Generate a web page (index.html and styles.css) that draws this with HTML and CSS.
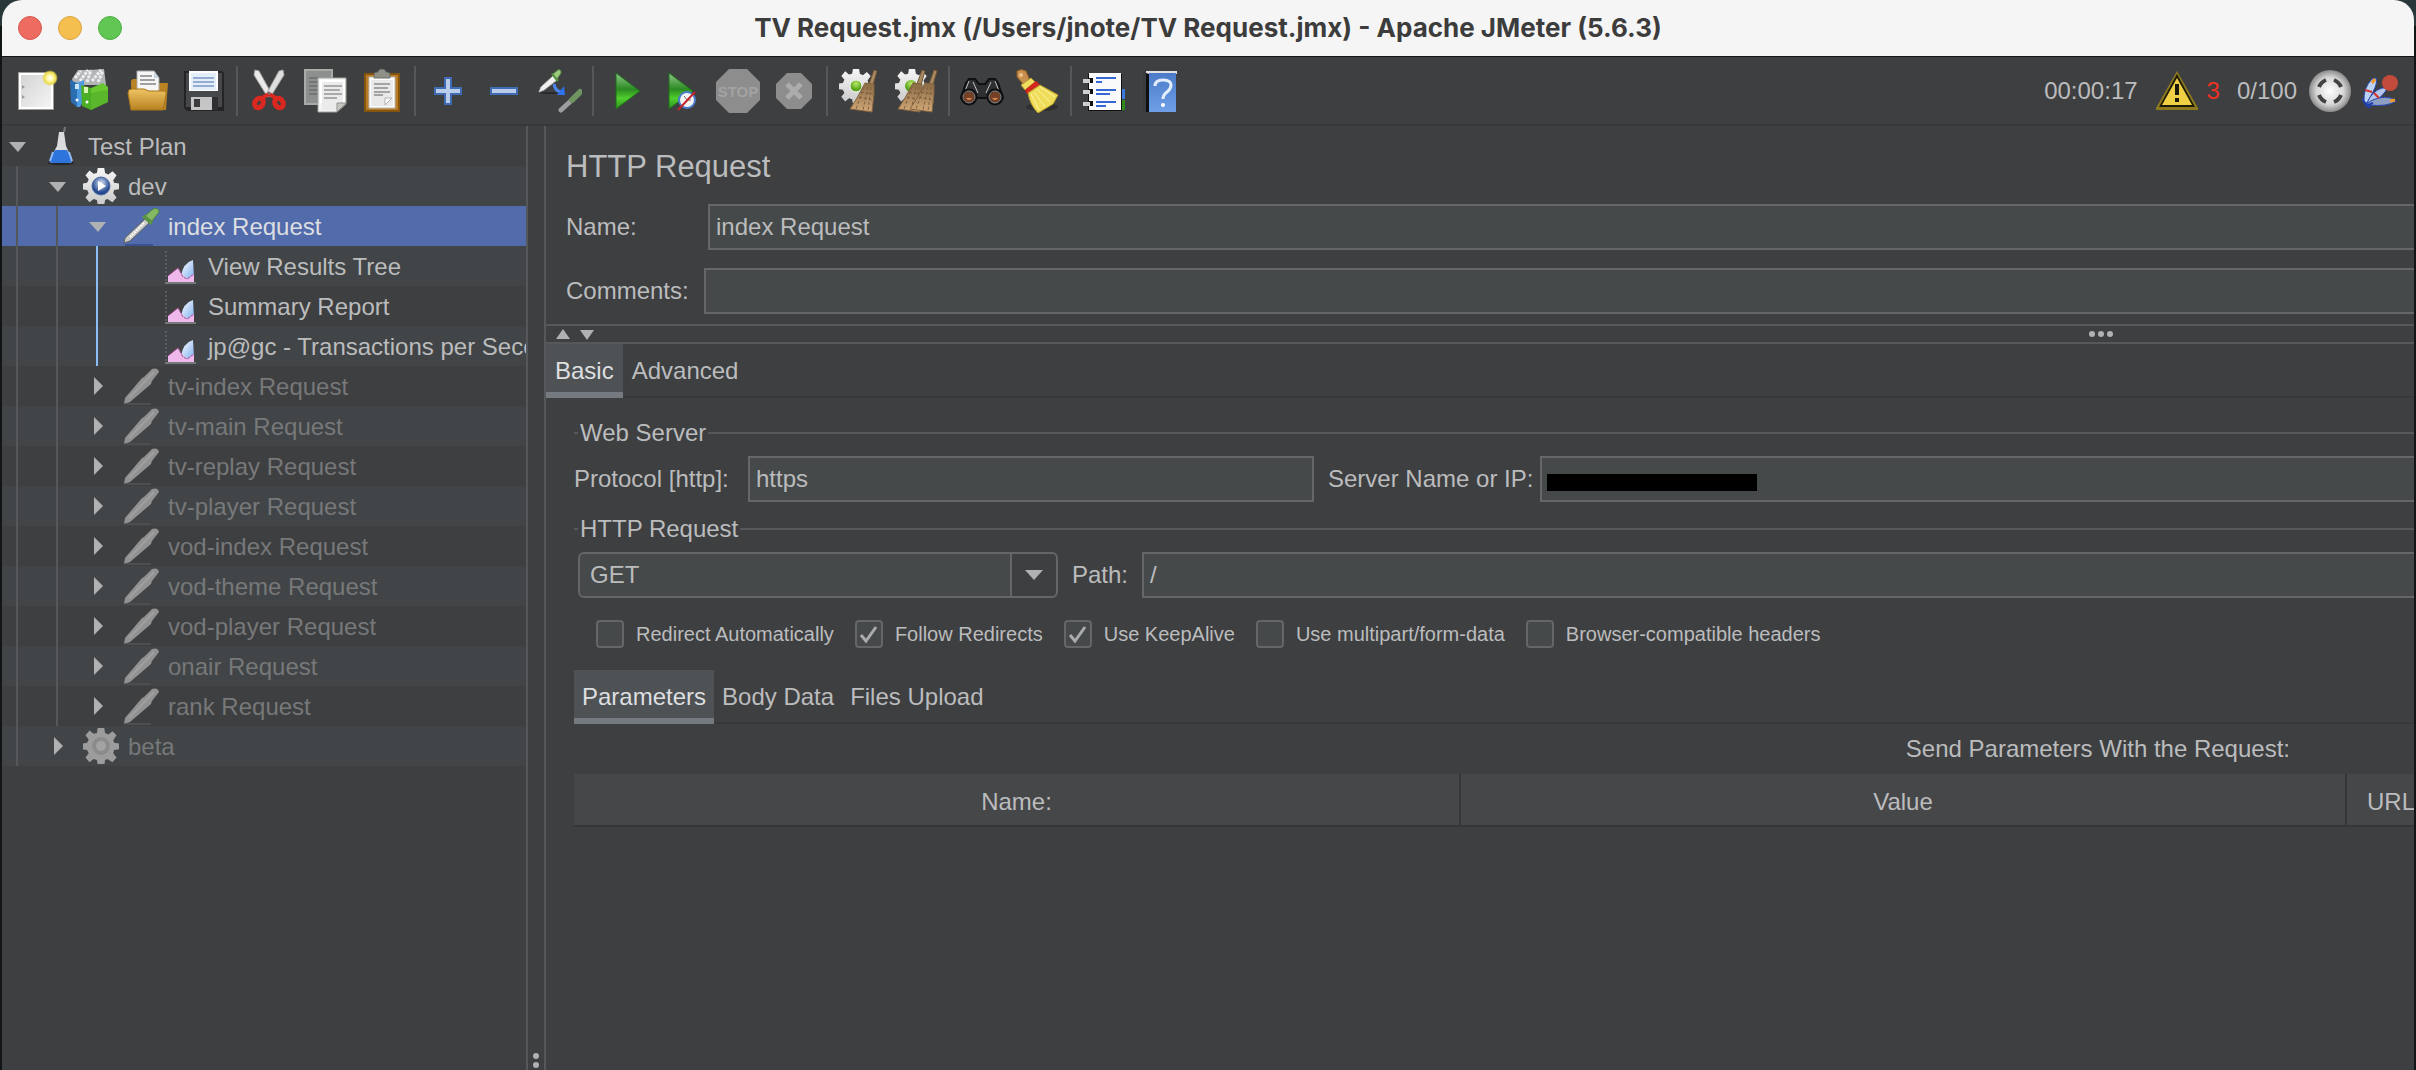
FILE: index.html
```html
<!DOCTYPE html>
<html lang="en">
<head>
<meta charset="utf-8">
<title>TV Request.jmx (/Users/jnote/TV Request.jmx) - Apache JMeter (5.6.3)</title>
<link rel="stylesheet" href="styles.css">
</head>
<body>
<svg class="defs" aria-hidden="true">
  <defs>
    <linearGradient id="g-play" x1="0" y1="0" x2="0" y2="1"><stop offset="0" stop-color="#8fc98a"/><stop offset=".45" stop-color="#2c8a22"/><stop offset=".7" stop-color="#4fce2c"/><stop offset="1" stop-color="#2f8f1f"/></linearGradient>
    <linearGradient id="g-folder" x1="0" y1="0" x2="0" y2="1"><stop offset="0" stop-color="#efc465"/><stop offset="1" stop-color="#b9811f"/></linearGradient>
    <linearGradient id="g-page" x1="0" y1="0" x2="1" y2="1"><stop offset="0" stop-color="#d4d4d4"/><stop offset="1" stop-color="#f4f4f4"/></linearGradient>
    <linearGradient id="g-gear" x1="0" y1="0" x2="0" y2="1"><stop offset="0" stop-color="#f6f6f6"/><stop offset="1" stop-color="#c9c9c9"/></linearGradient>
    <linearGradient id="g-broom" x1="0" y1="0" x2="0" y2="1"><stop offset="0" stop-color="#8a6b44"/><stop offset="1" stop-color="#d2a878"/></linearGradient>
    <linearGradient id="g-book" x1="0" y1="0" x2="0" y2="1"><stop offset="0" stop-color="#4c7cc8"/><stop offset="1" stop-color="#6f9fe6"/></linearGradient>
    <linearGradient id="g-blue" x1="0" y1="0" x2="1" y2="1"><stop offset="0" stop-color="#ffffff"/><stop offset="1" stop-color="#7fb0ee"/></linearGradient>
    <radialGradient id="g-ball"><stop offset="0" stop-color="#ffffff"/><stop offset=".65" stop-color="#d6d6d6"/><stop offset="1" stop-color="#8a8a8a"/></radialGradient>
    <radialGradient id="g-star"><stop offset="0" stop-color="#ffffff"/><stop offset=".4" stop-color="#fff7a0"/><stop offset=".75" stop-color="#e8d94a"/><stop offset="1" stop-color="#e8d94a" stop-opacity="0"/></radialGradient>
    <radialGradient id="g-hub" cx=".5" cy=".35"><stop offset="0" stop-color="#dbe8fa"/><stop offset="1" stop-color="#24498f"/></radialGradient>
    <radialGradient id="g-greenhub" cx=".5" cy=".3"><stop offset="0" stop-color="#b9e86a"/><stop offset="1" stop-color="#5aa51c"/></radialGradient>

    <symbol id="i-gearbody" viewBox="0 0 44 44">
      <path d="M18 0h8l1 6 4 2 5-4 5 5-4 6 1 3 6 1v7l-6 1-1 4 4 5-5 6-6-4-3 1-1 6h-8l-1-6-4-1-5 4-5-6 4-5-2-4-6-1v-7l6-1 2-4-4-5 5-6 5 4 4-1z"/>
    </symbol>
    <symbol id="i-brush" viewBox="0 0 28 44">
      <path d="M24 1l3 1-4 14-4-1z" fill="#a98a62" stroke="#6d5334" stroke-width="1"/>
      <path d="M15 14l9 1 0 10-2 18L0 40 7 29z" fill="url(#g-broom)" stroke="#80623e" stroke-width="1"/>
      <path d="M14 18L6 40M18 18l-5 23M21 18l-3 24M9 28l13 3M11 23l12 2" stroke="#7d6040" stroke-width="1" stroke-dasharray="3 2" fill="none"/>
    </symbol>

    <symbol id="i-new" viewBox="0 0 44 44">
      <path d="M4 3h36v38H4z" fill="#9b9c96"/><path d="M5 4h34v36H5z" fill="#fff"/><path d="M7 6h30v32H7z" fill="url(#g-page)"/>
      <path d="M8 16l3 2-3 2zM8 26l3 2-3 2z" fill="#9a9a9a"/><circle cx="36" cy="9" r="8" fill="url(#g-star)"/>
    </symbol>
    <symbol id="i-templates" viewBox="0 0 44 44">
      <path d="M2 10l6-9 12 0 14-1 2 16-16 0-16 0z" fill="#b3b6b8"/><path d="M5 9l6-7M10 12l8-11M17 13l4-12M22 12l9-11M28 13l5-11" stroke="#eceeee" stroke-width="3" fill="none" stroke-dasharray="3 1"/>
      <path d="M0 11l7 3v24l-6-5z" fill="#2a6db0"/><path d="M7 14l7-3v20l-4 7-3 0z" fill="#4d9be0"/>
      <path d="M11 16l10 3v22l-9-4z" fill="#4cae24"/><path d="M21 19l12-5 5 4v15l-17 8z" fill="#69c832"/><path d="M21 41V24l17-3v12z" fill="#4ba321" opacity=".5"/>
      <path d="M14 18h4v6h-4z" fill="#d9f5b8"/><path d="M5 15h4v5H5z" fill="#cfe5fa"/><circle cx="17" cy="33" r="1.500" fill="#fff"/><circle cx="7" cy="31" r="1.500" fill="#fff"/>
    </symbol>
    <symbol id="i-open" viewBox="0 0 44 44">
      <path d="M5 13q0-3 3-3h6l3 4h25l-2 27H6z" fill="#b98222"/>
      <path d="M11 2h17l5 7v14H11z" fill="#f6f6f6" stroke="#a8a8a8"/><path d="M28 2v7h5z" fill="#c9d6e2"/>
      <path d="M14 7h12M14 11h15M14 15h16" stroke="#a0a0a0" stroke-width="2"/>
      <path d="M2 24q0-4 4-4h12l5 2h15q3 0 2 4l-3 15H5z" fill="url(#g-folder)" stroke="#a87618"/>
    </symbol>
    <symbol id="i-save" viewBox="0 0 44 44">
      <path d="M2 2h38l2 2v38H5l-3-3z" fill="#242426"/><path d="M4 4h36v34H4z" fill="#47484b"/>
      <path d="M7 2h29v20H7z" fill="#fdfdfd"/><path d="M9 4h25v17H9z" fill="#e4eef9"/><path d="M11 9h21M11 13h21M11 17h21" stroke="#93acd0" stroke-width="2"/>
      <path d="M9 28h21v13H9z" fill="#c5c5c5"/><path d="M12 30h6v8h-6z" fill="#3a3a3c"/><path d="M30 28h6v13h-6z" fill="#303032"/>
    </symbol>
    <symbol id="i-cut" viewBox="0 0 44 44">
      <path d="M7 1l4 1 11 20 3 6-6-1L6 6z" fill="#e9e9e9" stroke="#a5a5a5"/><path d="M35 1l-4 1-11 20-3 6 6-1L36 6z" fill="#dedede" stroke="#a5a5a5"/>
      <ellipse cx="11" cy="34" rx="4" ry="5" transform="rotate(35 11 34)" fill="none" stroke="#d8281f" stroke-width="5"/><ellipse cx="31" cy="34" rx="4" ry="5" transform="rotate(-35 31 34)" fill="none" stroke="#d8281f" stroke-width="5"/>
      <path d="M14 29l7-4 7 4" stroke="#d8281f" stroke-width="4" fill="none"/><circle cx="21" cy="24" r="1.500" fill="#777"/>
    </symbol>
    <symbol id="i-copy" viewBox="0 0 44 44">
      <path d="M1 1h27v34H1z" fill="#8d8f8f" stroke="#a9aba9" stroke-width="2"/><path d="M5 9h10M5 13h10M5 17h10M5 21h8M5 25h9" stroke="#747676" stroke-width="2"/>
      <path d="M14 9h28v26l-9 8H14z" fill="#f3f3f3" stroke="#a3a49f" stroke-width="1"/><path d="M16 11h25v23H16z" fill="#fff"/><path d="M18 13h21v20l-6 8H18z" fill="#ebebeb"/>
      <path d="M20 17h18M20 21h16M20 25h18M20 29h13" stroke="#aaa" stroke-width="2"/><path d="M33 43v-9h9z" fill="#c6c7c2" stroke="#8f908b"/>
    </symbol>
    <symbol id="i-paste" viewBox="0 0 44 44">
      <path d="M5 5h34v37H5z" fill="#b87c26" stroke="#845411" stroke-width="2"/><path d="M9 8h26v31H9z" fill="#fff" stroke="#b9b9b9"/><path d="M11 11h22v26H11z" fill="#e9e9e9"/>
      <path d="M14 6q0-3 4-3 1-3 4-3t4 3q4 0 4 3v3H14z" fill="#8f9189" stroke="#6c6e66"/>
      <path d="M14 15h16M14 19h14M14 23h16M14 26h9" stroke="#a3a3a3" stroke-width="2"/><path d="M25 36v-7h7z" fill="#fff" stroke="#b0b0b0"/>
    </symbol>
    <symbol id="i-plus" viewBox="0 0 44 44"><path d="M18 8h8v10h10v8H26v10h-8V26H8v-8h10z" fill="#3f6cb4"/><path d="M20 10h4v10h10v4H24v10h-4V24H10v-4h10z" fill="#b9cdea"/></symbol>
    <symbol id="i-minus" viewBox="0 0 44 44"><path d="M8 18h28v8H8z" fill="#3f6cb4"/><path d="M10 20h24v4H10z" fill="#b9cdea"/></symbol>
    <symbol id="i-toggle" viewBox="0 0 44 44">
      <ellipse cx="12" cy="24" rx="10" ry="1" fill="#29292b"/><path d="M15 7l4 4L6 21l-5 2 2-5z" fill="#f1f1f1" stroke="#bdbdbd"/><path d="M13 5l2-1 6 7-2 2z" fill="#4f8f3b"/><path d="M15 5l5-4q3-1 3 3l-4 6z" fill="#9ccb7c" stroke="#5c8f45"/>
      <path d="M16 15q1 7 7 8" stroke="#4a86f0" stroke-width="3" fill="none"/><path d="M19 26l8 0-1-9z" fill="#2f72ee"/>
      <path d="M23 41l12-11" stroke="#9d9e9f" stroke-width="5" stroke-linecap="round"/><path d="M34 31l8-8" stroke="#6f9361" stroke-width="6" stroke-linecap="round"/>
    </symbol>
    <symbol id="i-start" viewBox="0 0 44 44"><path d="M12 4l24 18-24 18z" fill="url(#g-play)" stroke="#1f6d1c"/></symbol>
    <symbol id="i-startnt" viewBox="0 0 44 44"><path d="M9 4l24 18L9 40z" fill="url(#g-play)" stroke="#1f6d1c"/><circle cx="27" cy="31" r="8" fill="#f4f4f4" stroke="#4a7ccc" stroke-width="2"/><path d="M27 31l-3-4M27 31h4" stroke="#777" stroke-width="1"/><path d="M18 41l17-18" stroke="#c5242b" stroke-width="2"/></symbol>
    <symbol id="i-stop" viewBox="0 0 44 44"><path d="M13 0h18l13 13v18L31 44H13L0 31V13z" fill="#8d8d8d"/><text x="22" y="28" text-anchor="middle" class="stop-text" fill="#a3a3a3">STOP</text></symbol>
    <symbol id="i-shutdown" viewBox="0 0 44 44"><path d="M15 4h14l11 11v14L29 40H15L4 29V15z" fill="#8d8d8d"/><path d="M15 15l14 14M29 15L15 29" stroke="#acacac" stroke-width="5"/></symbol>
    <symbol id="i-clear" viewBox="0 0 44 44"><use href="#i-gearbody" x="1" y="0" width="34" height="34" fill="url(#g-gear)"/><circle cx="18" cy="17" r="6" fill="url(#g-greenhub)" stroke="#f5f5f5"/><use href="#i-brush" x="12" y="0" width="28" height="44"/></symbol>
    <symbol id="i-clearall" viewBox="0 0 44 44"><use href="#i-gearbody" x="1" y="0" width="34" height="34" fill="url(#g-gear)"/><circle cx="17" cy="17" r="6" fill="url(#g-greenhub)"/><use href="#i-brush" x="4" y="0" width="28" height="44"/><use href="#i-brush" x="16" y="0" width="28" height="44"/></symbol>
    <symbol id="i-search" viewBox="0 0 44 44">
      <path d="M6 14l3-4h6l4 5h6l4-5h6l3 4 5 15H1z" fill="#2d2f31" stroke="#0f1011" stroke-width="2"/><path d="M9 12l-4 10M35 12l4 10M13 13l5 11M31 13l-5 11" stroke="#c3c6c9" stroke-width="1"/>
      <circle cx="9" cy="28" r="7" fill="#744026" stroke="#0e0e0f" stroke-width="3"/><circle cx="35" cy="28" r="7" fill="#744026" stroke="#0e0e0f" stroke-width="3"/><circle cx="9" cy="28" r="6" fill="none" stroke="#8b8d8f"/><circle cx="35" cy="28" r="6" fill="none" stroke="#8b8d8f"/><path d="M6 29q3 4 6 0zM32 29q3 4 6 0z" fill="#d98a4e"/>
    </symbol>
    <symbol id="i-reset" viewBox="0 0 44 44">
      <ellipse cx="26" cy="38" rx="16" ry="4" fill="#2f3032"/><path d="M1 2q4-3 9 0l3 7 0 4-6 2-6-7z" fill="#c98f4e" stroke="#8d5b24"/><circle cx="5" cy="6" r="2" fill="#f0c48d"/>
      <path d="M5 16l10-7 4 4-10 8z" fill="#f0dc63" stroke="#b79d28"/><path d="M9 21l11-9 4 4-13 9z" fill="#d4261e"/>
      <path d="M12 24l12-8 18 10-5 9-15 9q-8-8-10-20z" fill="#efdc58" stroke="#b89f2a"/><path d="M15 25l8 16M18 23l11 15M21 20l13 13M24 18l15 10" stroke="#fbf3a2" stroke-width="1"/>
    </symbol>
    <symbol id="i-function" viewBox="0 0 44 44">
      <path d="M38 20h5v10h-5z" fill="#3c7ae0"/><path d="M38 31h5v10h-5z" fill="#2f8a1c"/><path d="M6 5h34v37H6z" fill="#111"/><path d="M7 4h32v37H7z" fill="#fafafa"/>
      <path d="M14 9h20M14 13h6M14 21h20M14 25h14M14 33h20M14 37h10" stroke="#3667d6" stroke-width="2"/>
      <path d="M7 9h4v5H7zM7 20h4v5H7zM7 32h4v5H7z" fill="#111"/><path d="M1 10h7v4H1zM1 21h7v4H1zM1 33h7v4H1z" fill="#d0d0d0"/>
    </symbol>
    <symbol id="i-help" viewBox="0 0 44 44">
      <path d="M5 2h34v3H5z" fill="#e2e2e2"/><path d="M5 3l6 2v38H5z" fill="#0e0f10"/><path d="M11 4h27v39H11z" fill="url(#g-book)"/><path d="M5 2h3v41H5z" fill="#3a3b3d"/>
      <path d="M17 17q0-6 8-6t8 5q0 4-4 7t-4 7" fill="none" stroke="#e3edfb" stroke-width="3"/><circle cx="25" cy="36" r="2" fill="#fff"/>
    </symbol>
    <symbol id="i-warning" viewBox="0 0 44 44">
      <path d="M22 2l21 37v2H1v-2z" fill="#8d7a1e"/><path d="M22 5l18 33H4z" fill="#1d1a08"/><path d="M22 9l15 27H7z" fill="#efd044"/><path d="M20 15h4v11h-4zM20 29h4v4h-4z" fill="#1a1808"/>
    </symbol>
    <symbol id="i-remote" viewBox="0 0 44 44"><circle cx="22" cy="22" r="21" fill="url(#g-ball)"/><path d="M18 11q-5 2-7 7M26 11q5 2 7 7M18 33q-5-2-7-7M26 33q5-2 7-7" stroke="#404244" stroke-width="4" fill="none"/></symbol>
    <symbol id="i-feather" viewBox="0 0 36 36">
      <path d="M2 29Q1 15 10 6l4-1q2 4-3 14L5 30z" fill="#bcd3f5" stroke="#2448b5" stroke-width="1"/><path d="M5 30q5-12 15-15h5q-2 7-16 16z" fill="#b5c6e8" stroke="#2448b5" stroke-width="1"/><path d="M4 31q12-9 25-6l5 3q-8 6-28 4z" fill="#8f9fc4" stroke="#2448b5" stroke-width="1"/>
      <path d="M10 10l3-4M28 28l5-1" stroke="#f09a2c" stroke-width="3"/><path d="M3 17l7 2M12 20l5 5" stroke="#d0342c" stroke-width="2"/><path d="M0 26l4 5 4 4M3 33l8-3" stroke="#1f3fae" stroke-width="2"/><circle cx="28" cy="10" r="8" fill="#c24b3c"/>
    </symbol>

    <symbol id="i-flask" viewBox="0 0 40 40"><ellipse cx="20" cy="37" rx="13" ry="2" fill="#24262a"/><path d="M18 6h5l2 14 6 13q1 4-3 4H11q-3 0-2-4l7-13z" fill="#dcdcde"/><path d="M14 24h12l5 10q0 3-3 3H12q-4 0-3-3z" fill="#2e74dd"/><path d="M12 26l-3 9M28 26l3 9" stroke="#8fb9f2" stroke-width="2"/><path d="M23 6l1-5" stroke="#77797b" stroke-width="2"/></symbol>
    <symbol id="i-gear" viewBox="0 0 40 40"><use href="#i-gearbody" x="2" y="2" width="36" height="36" fill="url(#g-gear)"/><circle cx="20" cy="20" r="9" fill="url(#g-hub)" stroke="#4d6ba0"/><path d="M17 15l8 5-8 5z" fill="#fff"/></symbol>
    <symbol id="i-gear-off" viewBox="0 0 40 40"><use href="#i-gearbody" x="2" y="2" width="36" height="36" fill="#9c9c9c"/><circle cx="20" cy="20" r="9" fill="#8b8b8b"/><circle cx="20" cy="20" r="5" fill="#a3a3a3"/></symbol>
    <symbol id="i-pipette" viewBox="0 0 40 40"><path d="M4 39h28" stroke="#3d5190" stroke-width="2"/><path d="M24 13l4 4L9 35l-6 2 1-5z" fill="#c9cbc9" stroke="#5f625f"/><path d="M23 17L9 31" stroke="#fff" stroke-width="2" stroke-dasharray="2 1"/><path d="M21 11l9 8 2-4-7-7z" fill="#5b9742"/><path d="M24 10l8-7q6-2 6 3l-7 9z" fill="#86b765" stroke="#4d8538"/></symbol>
    <symbol id="i-pipette-off" viewBox="0 0 40 40"><path d="M6 38h24" stroke="#4c4e50" stroke-width="2"/><path d="M21 12l2-1 8-8q6-2 7 3l-7 9-1 3L9 36l-6 2 1-6z" fill="#929292"/><path d="M33 6L8 32" stroke="#a0a0a0" stroke-width="2"/></symbol>
    <symbol id="i-chart" viewBox="0 0 40 40"><path d="M5 5v32" stroke="#76787a" stroke-width="1" stroke-dasharray="2 2"/><path d="M4 37h31" stroke="#76787a" stroke-width="2"/><path d="M20 30q2-13 12-16l1 17-7 2z" fill="url(#g-blue)"/><path d="M7 36v-6l10-8 5 8 5 3 6-5v8z" fill="#f0b9ec"/><path d="M7 30l10-8 5 9 4 2 7-5" stroke="#b04a94" stroke-width="1" fill="none" stroke-dasharray="3 1"/></symbol>
    <symbol id="i-down" viewBox="0 0 20 20"><path d="M1 6h17l-8 10z" fill="#afb1b3"/></symbol>
    <symbol id="i-right" viewBox="0 0 20 20"><path d="M6 1l9 9-9 9z" fill="#afb1b3"/></symbol>
  </defs>
</svg>

<div class="window">
  <header class="titlebar">
    <div class="lights"><button class="light close" aria-label="Close"></button><button class="light minimise" aria-label="Minimise"></button><button class="light maximise" aria-label="Zoom"></button></div>
    <h1 class="title">TV Request.jmx (/Users/jnote/TV Request.jmx) - Apache JMeter (5.6.3)</h1>
  </header>

  <div class="toolbar" role="toolbar">
    <button class="tool" aria-label="New"><svg><use href="#i-new"/></svg></button>
    <button class="tool" aria-label="Templates"><svg><use href="#i-templates"/></svg></button>
    <button class="tool" aria-label="Open"><svg><use href="#i-open"/></svg></button>
    <button class="tool" aria-label="Save"><svg><use href="#i-save"/></svg></button>
    <span class="sep"></span>
    <button class="tool" aria-label="Cut"><svg><use href="#i-cut"/></svg></button>
    <button class="tool" aria-label="Copy"><svg><use href="#i-copy"/></svg></button>
    <button class="tool" aria-label="Paste"><svg><use href="#i-paste"/></svg></button>
    <span class="sep"></span>
    <button class="tool" aria-label="Expand all"><svg><use href="#i-plus"/></svg></button>
    <button class="tool" aria-label="Collapse all"><svg><use href="#i-minus"/></svg></button>
    <button class="tool" aria-label="Toggle"><svg><use href="#i-toggle"/></svg></button>
    <span class="sep"></span>
    <button class="tool" aria-label="Start"><svg><use href="#i-start"/></svg></button>
    <button class="tool" aria-label="Start no pauses"><svg><use href="#i-startnt"/></svg></button>
    <button class="tool" aria-label="Stop"><svg><use href="#i-stop"/></svg></button>
    <button class="tool" aria-label="Shutdown"><svg><use href="#i-shutdown"/></svg></button>
    <span class="sep"></span>
    <button class="tool" aria-label="Clear"><svg><use href="#i-clear"/></svg></button>
    <button class="tool" aria-label="Clear all"><svg><use href="#i-clearall"/></svg></button>
    <span class="sep"></span>
    <button class="tool" aria-label="Search"><svg><use href="#i-search"/></svg></button>
    <button class="tool" aria-label="Reset search"><svg><use href="#i-reset"/></svg></button>
    <span class="sep"></span>
    <button class="tool" aria-label="Function helper"><svg><use href="#i-function"/></svg></button>
    <button class="tool" aria-label="Help"><svg><use href="#i-help"/></svg></button>
    <div class="status">
      <span class="clock">00:00:17</span>
      <button class="log" aria-label="Log errors"><svg class="log-icon"><use href="#i-warning"/></svg><span class="errors">3</span></button>
      <span class="threads">0/100</span>
      <svg class="remote"><use href="#i-remote"/></svg>
      <svg class="feather"><use href="#i-feather"/></svg>
    </div>
  </div>

  <div class="workspace">
    <nav class="tree">
      <ul class="rows">
        <li class="row"><button class="twisty" aria-label="Collapse"><svg><use href="#i-down"/></svg></button><svg class="node"><use href="#i-flask"/></svg><span class="label">Test Plan</span></li>
        <li class="row"><i class="guide"></i><button class="twisty" aria-label="Collapse"><svg><use href="#i-down"/></svg></button><svg class="node"><use href="#i-gear"/></svg><span class="label">dev</span></li>
        <li class="row selected"><i class="guide"></i><i class="guide"></i><button class="twisty" aria-label="Collapse"><svg><use href="#i-down"/></svg></button><svg class="node"><use href="#i-pipette"/></svg><span class="label">index Request</span></li>
        <li class="row"><i class="guide"></i><i class="guide"></i><i class="guide active"></i><span class="twisty"></span><svg class="node"><use href="#i-chart"/></svg><span class="label">View Results Tree</span></li>
        <li class="row"><i class="guide"></i><i class="guide"></i><i class="guide active"></i><span class="twisty"></span><svg class="node"><use href="#i-chart"/></svg><span class="label">Summary Report</span></li>
        <li class="row"><i class="guide"></i><i class="guide"></i><i class="guide active"></i><span class="twisty"></span><svg class="node"><use href="#i-chart"/></svg><span class="label">jp@gc - Transactions per Seco</span></li>
        <li class="row off"><i class="guide"></i><i class="guide"></i><button class="twisty" aria-label="Expand"><svg><use href="#i-right"/></svg></button><svg class="node"><use href="#i-pipette-off"/></svg><span class="label">tv-index Request</span></li>
        <li class="row off"><i class="guide"></i><i class="guide"></i><button class="twisty" aria-label="Expand"><svg><use href="#i-right"/></svg></button><svg class="node"><use href="#i-pipette-off"/></svg><span class="label">tv-main Request</span></li>
        <li class="row off"><i class="guide"></i><i class="guide"></i><button class="twisty" aria-label="Expand"><svg><use href="#i-right"/></svg></button><svg class="node"><use href="#i-pipette-off"/></svg><span class="label">tv-replay Request</span></li>
        <li class="row off"><i class="guide"></i><i class="guide"></i><button class="twisty" aria-label="Expand"><svg><use href="#i-right"/></svg></button><svg class="node"><use href="#i-pipette-off"/></svg><span class="label">tv-player Request</span></li>
        <li class="row off"><i class="guide"></i><i class="guide"></i><button class="twisty" aria-label="Expand"><svg><use href="#i-right"/></svg></button><svg class="node"><use href="#i-pipette-off"/></svg><span class="label">vod-index Request</span></li>
        <li class="row off"><i class="guide"></i><i class="guide"></i><button class="twisty" aria-label="Expand"><svg><use href="#i-right"/></svg></button><svg class="node"><use href="#i-pipette-off"/></svg><span class="label">vod-theme Request</span></li>
        <li class="row off"><i class="guide"></i><i class="guide"></i><button class="twisty" aria-label="Expand"><svg><use href="#i-right"/></svg></button><svg class="node"><use href="#i-pipette-off"/></svg><span class="label">vod-player Request</span></li>
        <li class="row off"><i class="guide"></i><i class="guide"></i><button class="twisty" aria-label="Expand"><svg><use href="#i-right"/></svg></button><svg class="node"><use href="#i-pipette-off"/></svg><span class="label">onair Request</span></li>
        <li class="row off"><i class="guide"></i><i class="guide"></i><button class="twisty" aria-label="Expand"><svg><use href="#i-right"/></svg></button><svg class="node"><use href="#i-pipette-off"/></svg><span class="label">rank Request</span></li>
        <li class="row off"><i class="guide"></i><button class="twisty" aria-label="Expand"><svg><use href="#i-right"/></svg></button><svg class="node"><use href="#i-gear-off"/></svg><span class="label">beta</span></li>
      </ul>
    </nav>
    <div class="divider"><i class="dot"></i><i class="dot"></i></div>

    <main class="pane">
      <section class="general">
        <h2 class="heading">HTTP Request</h2>
        <div class="line"><label class="wide" for="name">Name:</label><input class="field open" id="name" type="text" value="index Request"></div>
        <div class="line"><label class="narrow" for="comments">Comments:</label><input class="field open" id="comments" type="text"></div>
      </section>
      <div class="splitter">
        <svg class="collapse" viewBox="0 0 40 12"><path d="M1 11L8 1l7 10zM25 2h14l-7 10z" fill="#afb1b3"/></svg>
        <span class="grip"><i class="dot"></i><i class="dot"></i><i class="dot"></i></span>
      </div>
      <div class="tabs outer" role="tablist"><button class="tab current" role="tab">Basic</button><button class="tab" role="tab">Advanced</button></div>
      <div class="basic">
        <h3 class="group">Web Server</h3>
        <div class="line server">
          <label for="protocol">Protocol [http]:</label><input class="field protocol" id="protocol" type="text" value="https">
          <label class="server-label" for="server">Server Name or IP:</label>
          <div class="masked"><input class="field open" id="server" type="text"><i class="mask"></i></div>
        </div>
        <h3 class="group">HTTP Request</h3>
        <div class="line request">
          <select class="method" aria-label="Method"><option>GET</option></select>
          <label for="path">Path:</label><input class="field open" id="path" type="text" value="/">
        </div>
        <div class="options">
          <label class="option"><input type="checkbox">Redirect Automatically</label>
          <label class="option"><input type="checkbox" checked>Follow Redirects</label>
          <label class="option"><input type="checkbox" checked>Use KeepAlive</label>
          <label class="option"><input type="checkbox">Use multipart/form-data</label>
          <label class="option"><input type="checkbox">Browser-compatible headers</label>
        </div>
        <div class="tabs inner" role="tablist"><button class="tab current" role="tab">Parameters</button><button class="tab" role="tab">Body Data</button><button class="tab" role="tab">Files Upload</button></div>
        <table class="params">
          <caption>Send Parameters With the Request:</caption>
          <thead><tr><th class="half">Name:</th><th class="half">Value</th><th class="rest">URL</th></tr></thead>
        </table>
      </div>
    </main>
  </div>
</div>
</body>
</html>
```
FILE: styles.css
```css
* { box-sizing: border-box; }

html { background: linear-gradient(#28373a 0 26px, #121516 26px); height: 100%; }

body {
  margin: 0;
  height: 100%;
  font: 24px/28px "Liberation Sans", Arial, sans-serif;
  color: #bbbcbd;
  overflow: hidden;
}

button {
  padding: 0;
  border: 0;
  background: none;
  font: inherit;
  color: inherit;
}

.defs { position: absolute; width: 0; height: 0; }

.window {
  display: flex;
  flex-direction: column;
  height: 100%;
  margin: 0 2px;
  border-radius: 20px 20px 0 0;
  overflow: hidden;
  background: #3e3f41;
}

/* Title bar */
.titlebar {
  display: grid;
  grid-template-columns: 1fr auto 1fr;
  align-items: center;
  height: 57px;
  flex: none;
  background: #f5f5f5;
  border-bottom: 1px solid #161616;
}
.lights { display: flex; gap: 16px; padding-left: 16px; }
.light { width: 24px; height: 24px; border-radius: 50%; border: 1px solid; }
.close { background: #ed6b60; border-color: #d85a50; }
.minimise { background: #f5bf4f; border-color: #d9a440; }
.maximise { background: #62c655; border-color: #50ae43; }
.title {
  margin: 0;
  font: 700 26px/32px Inter, "Liberation Sans", sans-serif;
  color: #3c3c3c;
}

/* Toolbar */
.toolbar {
  display: flex;
  align-items: center;
  flex: none;
  height: 69px;
  padding-left: 6px;
  border-bottom: 2px solid #37383a;
}
.tool { display: grid; place-items: center; width: 56px; height: 56px; }
.tool svg, .log-icon, .remote { width: 44px; height: 44px; }
.stop-text { font: bold 15px "Liberation Sans", Arial, sans-serif; }
.sep { width: 10px; height: 50px; border: solid transparent; border-width: 0 4px; background: #55575a content-box; background-clip: content-box; }
.status { display: flex; align-items: center; margin-left: auto; padding-right: 16px; }
.log { display: flex; align-items: center; gap: 8px; margin: 0 17px; }
.errors { color: #ef3124; }
.threads { margin-right: 11px; }
.feather { width: 36px; height: 36px; margin-left: 10px; }

/* Work area */
.workspace { display: flex; flex: 1; min-height: 0; }
.tree { width: 524px; flex: none; overflow: hidden; }
.rows { margin: 0; padding: 0; list-style: none; }
.row {
  display: flex;
  align-items: center;
  height: 40px;
  padding-left: 6px;
  white-space: nowrap;
}
.row:nth-child(even) { background: #414547; }
.row.selected { background: #526cab; color: #dcdee2; }
.off { color: #777879; }
.label { padding-top: 2px; }
.guide {
  flex: none;
  width: 40px;
  height: 40px;
  background: linear-gradient(#55575a, #55575a) 8px 0 / 2px 100% no-repeat;
}
.guide.active { background-image: linear-gradient(#8abdf6, #8abdf6); }
.twisty { flex: none; display: flex; width: 32px; height: 20px; }
.twisty svg { width: 20px; height: 20px; }
.node { flex: none; width: 42px; height: 40px; margin-right: 6px; }

.divider {
  flex: none;
  display: flex;
  flex-direction: column;
  justify-content: flex-end;
  align-items: center;
  gap: 3px;
  width: 20px;
  padding-bottom: 2px;
  border: solid #55575a;
  border-width: 0 2px;
}
.dot { width: 6px; height: 6px; border-radius: 50%; background: #afb1b3; }

/* Editor */
.pane { flex: 1; min-width: 0; }
.general { display: flex; flex-direction: column; gap: 18px; padding: 22px 0 10px 20px; }
.heading { margin: 0; font-size: 31px; line-height: 38px; font-weight: normal; }
.line { display: flex; align-items: center; }
.wide { width: 142px; }
.narrow { width: 138px; }
.field {
  flex: 1;
  min-width: 0;
  width: 100%;
  height: 46px;
  margin: 0;
  padding: 0 6px;
  border: 2px solid #646668;
  border-radius: 0;
  background: #45494a;
  font: inherit;
  color: inherit;
}
.field.open { border-right: 0; }

.splitter {
  display: flex;
  align-items: center;
  justify-content: space-between;
  height: 20px;
  padding: 0 301px 0 9px;
  border: solid #55575a;
  border-width: 2px 0;
}
.collapse { width: 40px; height: 12px; }
.grip { display: flex; gap: 3px; }

.tabs { display: flex; height: 54px; background: linear-gradient(#37383a, #37383a) 0 100% / 100% 2px no-repeat; }
.tab { padding: 5px 9px 0; border-bottom: 6px solid transparent; }
.inner .tab { padding: 5px 8px 0; }
.tab.current { background: #4e5254; border-color: #747a80; color: #dedfe0; }

.basic { padding: 20px 0 0 28px; }
.group {
  display: flex;
  align-items: center;
  gap: 2px;
  height: 30px;
  margin: 0;
  font-size: 24px;
  font-weight: normal;
}
.group::before, .group::after { content: ""; height: 2px; background: #55575a; }
.group::before { width: 4px; }
.group::after { flex: 1; }
.server { height: 46px; margin: 8px 0 12px; }
.server label { width: 174px; }
.protocol { flex: none; width: 566px; }
.server .server-label { width: 226px; padding-left: 14px; }
.masked { flex: 1; display: flex; position: relative; }
.mask { position: absolute; left: 7px; top: 18px; width: 210px; height: 17px; background: #000; }

.request { height: 46px; margin: 8px 0 22px; padding-left: 4px; }
.method {
  appearance: none;
  width: 480px;
  height: 46px;
  padding: 0 10px;
  border: 2px solid #646668;
  border-radius: 6px;
  background:
    url("data:image/svg+xml,%3Csvg xmlns='http://www.w3.org/2000/svg' width='18' height='12'%3E%3Cpath d='M0 1h18l-9 10z' fill='%23afb1b3'/%3E%3C/svg%3E") right 13px center no-repeat,
    linear-gradient(90deg, #646668 2px, #3e3f41 2px) right / 46px 100% no-repeat,
    #45494a;
  font: inherit;
  color: inherit;
}
.request label { width: 84px; padding-left: 14px; }

.options { display: flex; gap: 21px; padding-left: 22px; font-size: 20px; }
.option { display: flex; align-items: center; gap: 12px; }
.option input {
  appearance: none;
  width: 28px;
  height: 28px;
  margin: 0;
  border: 2px solid #646668;
  border-radius: 4px;
  background: #45494a center no-repeat;
}
.option input:checked {
  background-image: url("data:image/svg+xml,%3Csvg xmlns='http://www.w3.org/2000/svg' width='24' height='24'%3E%3Cpath d='M4 13l5 6L19 5' fill='none' stroke='%23a9abac' stroke-width='3'/%3E%3C/svg%3E");
}

.inner { margin-top: 22px; }
.params { width: 100%; border-collapse: collapse; table-layout: fixed; }
.params caption { height: 50px; padding: 11px 124px 0 0; text-align: right; }
.params th {
  height: 52px;
  padding: 4px 0 0;
  border-bottom: 2px solid #343638;
  background: #464749;
  font-weight: normal;
}
.params .half { width: 886px; border-right: 2px solid #343638; }
.params .rest { padding-left: 20px; text-align: left; }
```
